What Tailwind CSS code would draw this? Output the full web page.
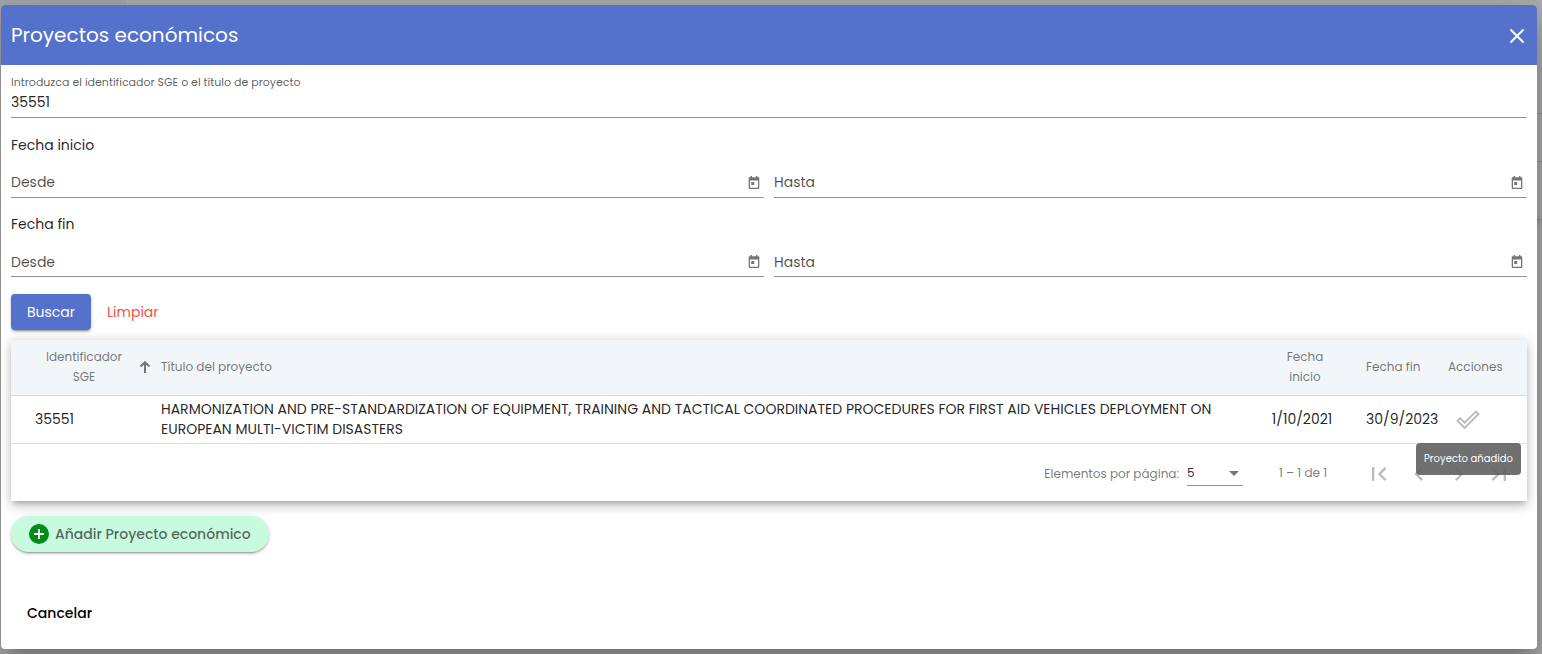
<!DOCTYPE html>
<html lang="es">
<head>
<meta charset="utf-8">
<meta name="viewport" content="width=device-width, initial-scale=1">
<title>Proyectos económicos</title>
<script src="https://cdn.jsdelivr.net/npm/@tailwindcss/browser@4"></script>
</head>
<body class="relative min-h-screen overflow-hidden bg-[#adadad] pt-[5px] pr-[5px] pb-[5px] pl-px font-['Poppins','Inter',sans-serif] text-sm text-black/87">
<!-- Page behind the dialog -->
<div aria-hidden="true" class="absolute top-0 left-0 h-10 w-[127px] bg-[#a6a6a8]"></div>
<div aria-hidden="true" class="absolute top-[113px] right-0 h-[107px] w-5 border-y border-[#999] bg-[#adadad] shadow-md"></div>
<div aria-hidden="true" class="absolute top-[161px] right-0 h-px w-5 bg-[#999]"></div>

<main role="dialog" aria-labelledby="dlg-title" class="relative rounded bg-white shadow-[0_11px_15px_-7px_rgba(0,0,0,.2),0_24px_38px_3px_rgba(0,0,0,.14),0_9px_46px_8px_rgba(0,0,0,.12)]">
  <header class="flex h-[60px] items-center justify-between rounded-t bg-[#5472cb] px-[10px] text-white">
    <h1 id="dlg-title" class="text-xl">Proyectos económicos</h1>
    <button type="button" aria-label="Cerrar" class="flex size-5 items-center justify-center">
      <svg class="size-5" viewBox="0 0 20 20" fill="none" stroke="currentColor" stroke-width="1.9"><path d="M3.5 4.5l13 13M16.5 4.5l-13 13"/></svg>
    </button>
  </header>

  <form class="px-[10px] pt-2" onsubmit="return false">
    <div class="border-b border-[#949494] pb-1">
      <label for="q" class="block text-[11px] leading-[18px] text-black/65">Introduzca el identificador SGE o el título de proyecto</label>
      <input id="q" type="text" value="35551" class="block h-[22px] w-full text-sm outline-none">
    </div>

    <fieldset>
      <legend class="pt-[17px] leading-5">Fecha inicio</legend>
      <div class="grid grid-cols-2 gap-[10px] pt-[17px]">
        <div class="flex h-[26px] items-start border-b border-[#949494]">
          <input type="text" aria-label="Fecha inicio desde" placeholder="Desde" class="h-5 min-w-0 flex-1 outline-none placeholder:text-black/70">
          <button type="button" aria-label="Abrir calendario" class="mt-1 mr-1 text-[#757575]"><svg class="h-[13px] w-3" viewBox="0 0 12 13" fill="currentColor"><path fill-rule="evenodd" d="M2.500 0H4v1.300h4V0h1.500v1.300h.7c.6 0 1.100.4 1.100 1V12c0 .6-.5 1-1.100 1H1.800c-.6 0-1.100-.4-1.100-1V2.300c0-.6.500-1 1.100-1h.7zM2 4.500v7.300h8V4.500zM3.200 6h3v3h-3z"/></svg></button>
        </div>
        <div class="flex h-[26px] items-start border-b border-[#949494]">
          <input type="text" aria-label="Fecha inicio hasta" placeholder="Hasta" class="h-5 min-w-0 flex-1 outline-none placeholder:text-black/70">
          <button type="button" aria-label="Abrir calendario" class="mt-1 mr-1 text-[#757575]"><svg class="h-[13px] w-3" viewBox="0 0 12 13" fill="currentColor"><path fill-rule="evenodd" d="M2.500 0H4v1.300h4V0h1.500v1.300h.7c.6 0 1.100.4 1.100 1V12c0 .6-.5 1-1.100 1H1.800c-.6 0-1.100-.4-1.100-1V2.300c0-.6.500-1 1.100-1h.7zM2 4.500v7.300h8V4.500zM3.200 6h3v3h-3z"/></svg></button>
        </div>
      </div>
    </fieldset>

    <fieldset>
      <legend class="pt-4 leading-5">Fecha fin</legend>
      <div class="grid grid-cols-2 gap-[10px] pt-[18px]">
        <div class="flex h-[25px] items-start border-b border-[#949494]">
          <input type="text" aria-label="Fecha fin desde" placeholder="Desde" class="h-5 min-w-0 flex-1 outline-none placeholder:text-black/70">
          <button type="button" aria-label="Abrir calendario" class="mt-[3px] mr-1 text-[#757575]"><svg class="h-[13px] w-3" viewBox="0 0 12 13" fill="currentColor"><path fill-rule="evenodd" d="M2.500 0H4v1.300h4V0h1.500v1.300h.7c.6 0 1.100.4 1.100 1V12c0 .6-.5 1-1.100 1H1.800c-.6 0-1.100-.4-1.100-1V2.300c0-.6.500-1 1.100-1h.7zM2 4.500v7.300h8V4.500zM3.200 6h3v3h-3z"/></svg></button>
        </div>
        <div class="flex h-[25px] items-start border-b border-[#949494]">
          <input type="text" aria-label="Fecha fin hasta" placeholder="Hasta" class="h-5 min-w-0 flex-1 outline-none placeholder:text-black/70">
          <button type="button" aria-label="Abrir calendario" class="mt-[3px] mr-1 text-[#757575]"><svg class="h-[13px] w-3" viewBox="0 0 12 13" fill="currentColor"><path fill-rule="evenodd" d="M2.500 0H4v1.300h4V0h1.500v1.300h.7c.6 0 1.100.4 1.100 1V12c0 .6-.5 1-1.100 1H1.800c-.6 0-1.100-.4-1.100-1V2.300c0-.6.500-1 1.100-1h.7zM2 4.500v7.300h8V4.500zM3.200 6h3v3h-3z"/></svg></button>
        </div>
      </div>
    </fieldset>

    <div class="mt-[17px] flex">
      <button type="submit" class="h-9 w-20 rounded bg-[#5472cb] text-white shadow-[0_3px_1px_-2px_rgba(0,0,0,.2),0_2px_2px_rgba(0,0,0,.14),0_1px_5px_rgba(0,0,0,.12)]">Buscar</button>
      <button type="reset" class="h-9 px-4 text-[#f44f47]">Limpiar</button>
    </div>
  </form>

  <section class="mx-[10px] mt-[10px] shadow-[0_5px_5px_-3px_rgba(0,0,0,.2),0_8px_10px_1px_rgba(0,0,0,.08),0_1px_10px_1px_rgba(0,0,0,.16)]">
    <table class="w-full table-fixed border-collapse">
      <colgroup><col class="w-[150px]"><col><col class="w-[120px]"><col class="w-[82px]"><col class="w-[79px]"></colgroup>
      <thead class="bg-[#f2f6f9] text-xs leading-5 text-black/54">
        <tr class="h-[55px] border-b border-[#d8dadc]">
          <th class="p-0 font-normal" aria-sort="ascending">
            <button type="button" class="flex w-full items-center pl-6 leading-5"><span class="w-[98px]">Identificador<br>SGE</span>
              <svg class="ml-1.5 size-3" viewBox="0 0 12 12" fill="none" stroke="#757575" stroke-width="2"><path d="M6 12V1.500M1.500 5.500L6 1.200l4.500 4.300"/></svg></button>
          </th>
          <th class="p-0 text-left font-normal">Título del proyecto</th>
          <th class="p-0 pr-0.5 font-normal">Fecha<br>inicio</th>
          <th class="p-0 text-left font-normal">Fecha fin</th>
          <th class="p-0 text-left font-normal">Acciones</th>
        </tr>
      </thead>
      <tbody>
        <tr class="h-12 border-b border-[#e0e0e0] leading-5">
          <td class="p-0 pl-6">35551</td>
          <td class="p-0">HARMONIZATION AND PRE-STANDARDIZATION OF EQUIPMENT, TRAINING AND TACTICAL COORDINATED PROCEDURES FOR FIRST AID VEHICLES DEPLOYMENT ON<br>EUROPEAN MULTI-VICTIM DISASTERS</td>
          <td class="p-0 pr-2 text-center">1/10/2021</td>
          <td class="p-0">30/9/2023</td>
          <td class="p-0 pl-2">
            <div class="relative w-6">
              <button type="button" aria-label="Añadir" aria-describedby="tip" class="block"><svg class="size-6" viewBox="0 0 24 24" fill="none" stroke="#b8b8b8" stroke-width="1.800"><path d="M1.500 13.800L4.200 11.200L8.700 15.700L20 4.400L22.600 7L8.700 20.900Z"/></svg></button>
              <div id="tip" role="tooltip" class="absolute top-9 -right-[41px] z-10 h-8 w-[105px] rounded bg-[#616161]/90 text-center text-[10px] leading-8 whitespace-nowrap text-white">Proyecto añadido</div>
            </div>
          </td>
        </tr>
      </tbody>
    </table>
    <div class="flex h-[57px] items-center justify-end pr-2 text-xs text-black/54">
      <label for="size" class="pt-1">Elementos por página:</label>
      <div class="relative ml-2 w-14">
        <select id="size" class="block h-[27px] w-full appearance-none border-b border-[#949494] pt-0.5 text-black/87 outline-none"><option>5</option></select>
        <svg aria-hidden="true" class="pointer-events-none absolute top-3 right-1 h-[5px] w-[10px]" viewBox="0 0 10 5" fill="#757575"><path d="M0 0h10L5 5z"/></svg>
      </div>
      <span class="mr-8 ml-9 w-12 pt-0.5 whitespace-nowrap">1 – 1 de 1</span>
      <nav aria-label="Paginación" class="flex pt-1 text-[#bdbdbd]">
        <button type="button" disabled aria-label="Primera página" class="flex size-10 items-center justify-center"><svg class="size-7" viewBox="0 0 24 24" fill="currentColor"><path d="M18.410 16.590L13.820 12l4.590-4.590L17 6l-6 6 6 6zM6 6h2v12H6z"/></svg></button>
        <button type="button" disabled aria-label="Página anterior" class="flex size-10 items-center justify-center"><svg class="size-7" viewBox="0 0 24 24" fill="currentColor"><path d="M15.410 7.410L14 6l-6 6 6 6 1.410-1.410L10.830 12z"/></svg></button>
        <button type="button" disabled aria-label="Página siguiente" class="flex size-10 items-center justify-center"><svg class="size-7" viewBox="0 0 24 24" fill="currentColor"><path d="M10 6L8.590 7.410 13.170 12l-4.580 4.590L10 18l6-6z"/></svg></button>
        <button type="button" disabled aria-label="Última página" class="flex size-10 items-center justify-center"><svg class="size-7" viewBox="0 0 24 24" fill="currentColor"><path d="M5.590 7.410L10.180 12l-4.590 4.590L7 18l6-6-6-6zM16 6h2v12h-2z"/></svg></button>
      </nav>
    </div>
  </section>

  <footer class="flex flex-col items-start px-[10px] pt-[15px] pb-[18px]">
    <button type="button" class="flex h-9 items-center gap-1.5 rounded-full bg-[#c8fae0] px-[18px] text-sm font-medium whitespace-nowrap text-black/60 shadow-[0_3px_1px_-2px_rgba(0,0,0,.2),0_2px_2px_rgba(0,0,0,.14),0_1px_5px_rgba(0,0,0,.12)]">
      <svg class="size-5" viewBox="0 0 20 20"><circle cx="10" cy="10" r="10" fill="#058b1c"/><path d="M10 5v10M5 10h10" stroke="#fff" stroke-width="1.800"/></svg>
      Añadir Proyecto económico
    </button>
    <button type="button" class="mt-[43px] h-9 px-4 font-medium text-black">Cancelar</button>
  </footer>
</main>
</body>
</html>
